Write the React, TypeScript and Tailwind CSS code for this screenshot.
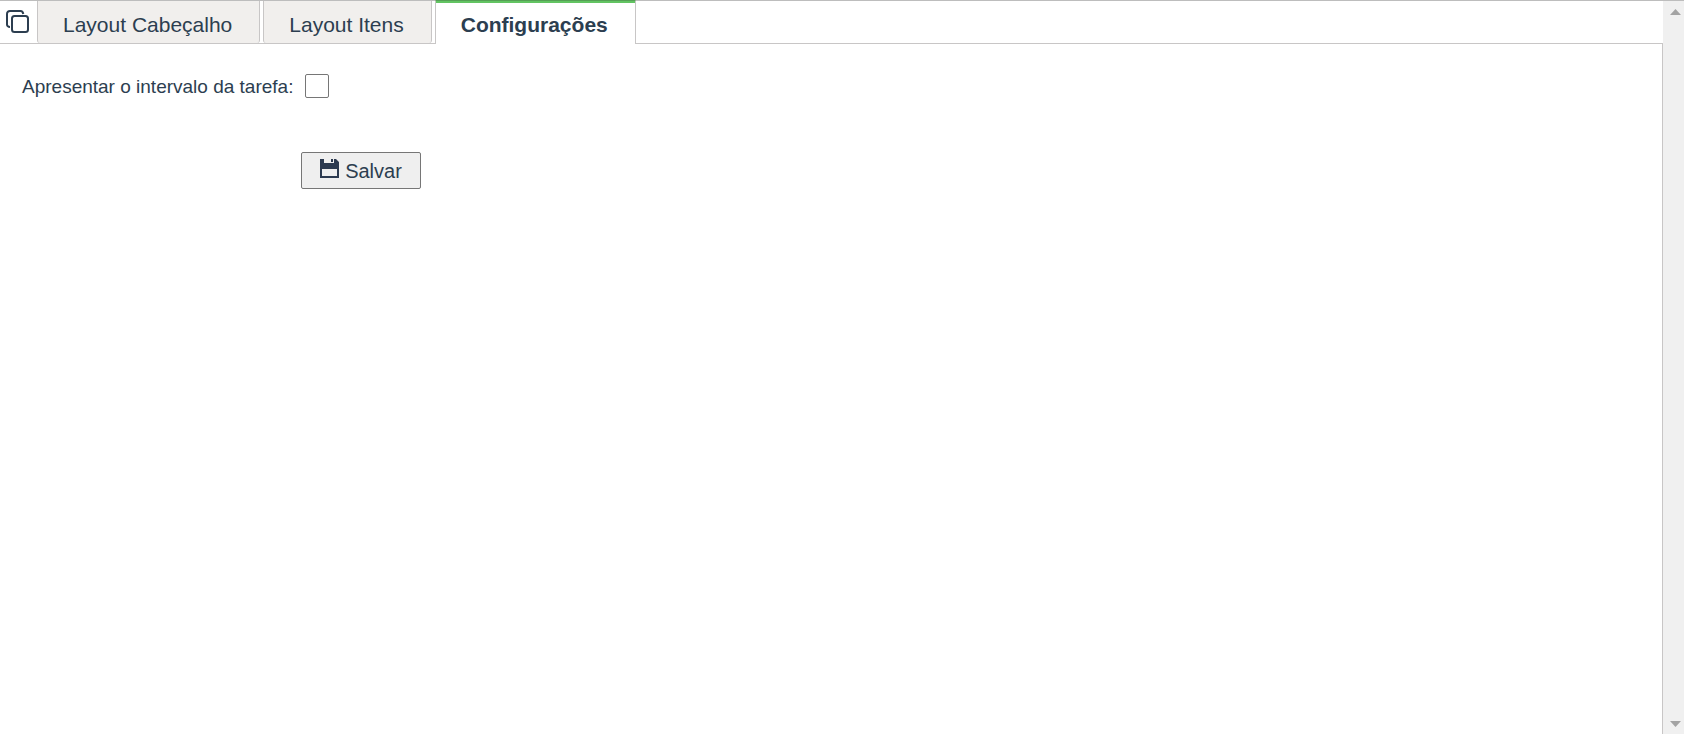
import { useState } from 'react';

const tabs = ['Layout Cabeçalho', 'Layout Itens', 'Configurações'];

function CopyIcon() {
  return (
    <svg width="24" height="24" viewBox="0 0 24 24" fill="none" stroke="#2c3e50" strokeWidth="2">
      <rect x="6" y="6" width="16" height="16" rx="2.500" />
      <path d="M4 17C2.200 17 1 16 1 14.500V4C1 2.200 2.200 1 4 1H14.500C16 1 17 2 17.300 4" />
    </svg>
  );
}

function SaveIcon() {
  return (
    <svg width="19" height="19" viewBox="0 0 19 19" fill="none" className="mb-1">
      <path
        fill="#2c3a50"
        fillRule="evenodd"
        d="M0 0H4V4H14V0H16L19 3V19H0ZM2 10V17H17V10Z"
      />
      <path fill="#2c3a50" d="M11 0H13V3H11Z" />
    </svg>
  );
}

function ScrollBar() {
  return (
    <div className="flex w-[21px] shrink-0 flex-col items-center justify-between bg-[#f0f0f0] pt-2 pb-[7px] pl-1">
      <svg width="11" height="6" viewBox="0 0 11 6" fill="#a3a3a3">
        <path d="M0 6L5.500 0L11 6Z" />
      </svg>
      <svg width="11" height="6" viewBox="0 0 11 6" fill="#a3a3a3">
        <path d="M0 0H11L5.500 6Z" />
      </svg>
    </div>
  );
}

export default function App() {
  const [active, setActive] = useState(2);
  const [showInterval, setShowInterval] = useState(false);

  return (
    <div className="flex h-screen border-t border-[#bdbdbd] bg-white font-['Liberation_Sans',Arial,sans-serif] text-[#2c3e50]">
      <div className="flex min-w-0 flex-1 flex-col">
        <div className="flex h-[43px] shrink-0 border-b border-[#c8c6c6]">
          <button
            type="button"
            aria-label="Copiar"
            className="flex w-[37px] items-start pt-[9px] pl-[6px]"
          >
            <CopyIcon />
          </button>
          <div role="tablist" className="flex gap-[3px]">
            {tabs.map((tab, i) => (
              <button
                key={tab}
                type="button"
                role="tab"
                aria-selected={i === active}
                onClick={() => setActive(i)}
                className={
                  i === active
                    ? '-my-px border-x border-t border-x-[#c8c6c6] border-t-[#559f55] bg-white text-[21px] leading-6 font-bold'
                    : 'rounded-b-[3px] border-x border-[#c8c6c6] bg-[#f1efed] pt-1.5 pr-[27px] pl-[25px] text-[21px] leading-6'
                }
              >
                {i === active ? (
                  <span className="flex h-full items-center justify-center border-t-2 border-[#62c462] pt-[3px] pr-[27px] pl-[25px]">
                    {tab}
                  </span>
                ) : (
                  tab
                )}
              </button>
            ))}
          </div>
        </div>
        <form
          onSubmit={(e) => e.preventDefault()}
          className="flex-1 border-r border-[#c8c6c6] pt-[29px] pl-[22px] text-[19px] leading-6"
        >
          <div className="flex items-center gap-1">
            <label htmlFor="interval" className="min-w-[279px] pt-0.5">
              Apresentar o intervalo da tarefa:
            </label>
            <input
              id="interval"
              type="checkbox"
              checked={showInterval}
              onChange={(e) => setShowInterval(e.target.checked)}
              className="size-6 appearance-none rounded-xs border border-[#767676] bg-white checked:bg-[#2c3e50]"
            />
          </div>
          <button
            type="submit"
            className="mt-[53px] ml-[279px] flex h-[37px] w-[120px] items-center justify-center gap-1.5 rounded-xs border border-[#767676] bg-[#efefef] text-[20px]"
          >
            <SaveIcon />
            Salvar
          </button>
        </form>
      </div>
      <ScrollBar />
    </div>
  );
}
